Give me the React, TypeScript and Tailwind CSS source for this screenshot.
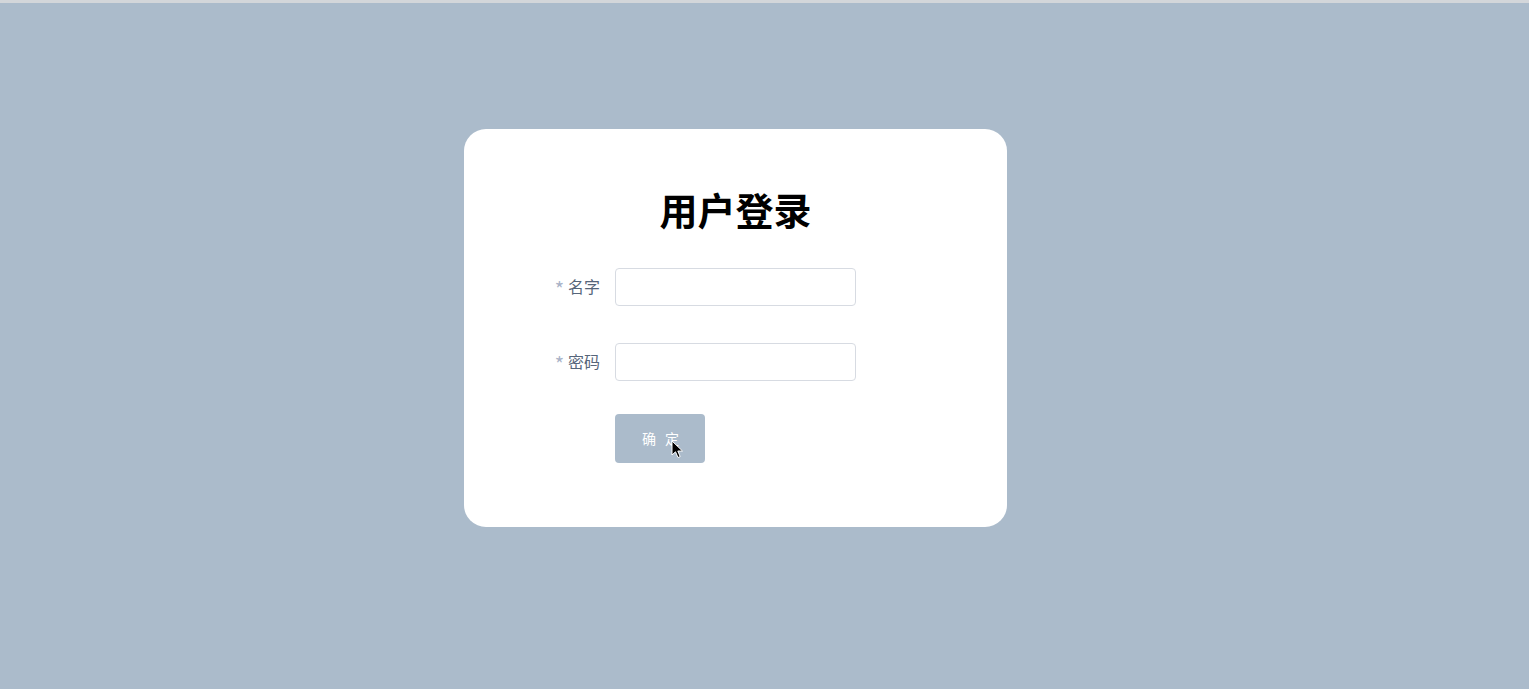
import React from 'react';

// Login card: title, two required fields and a submit button.
const FONT = { fontFamily: '"Noto Sans CJK SC", "Noto Sans", sans-serif' };

function Field({ label, type = 'text' }: { label: string; type?: string }) {
  return (
    <div className="flex items-center">
      <label className="w-[80px] pr-[15px] flex items-center justify-end text-[16px] text-[#56657a] leading-none">
        <span className="text-[#a9b3c8] text-[20px] leading-none mr-[4px] mt-[4px]">*</span>
        <span className="-mt-[2px]">{label}</span>
      </label>
      <input
        type={type}
        className="w-[241px] h-[38px] rounded-[4px] border border-[#d7dbe2] bg-white px-3 text-sm outline-none"
      />
    </div>
  );
}

function Cursor() {
  return (
    <svg
      width="13"
      height="20"
      viewBox="0 0 13 20"
      className="absolute left-[56px] top-[26px]"
      aria-hidden="true"
    >
      <path
        d="M1 1 L1 15 L4.5 11.8 L7 17.5 L9.2 16.6 L6.8 11 L11.5 11 Z"
        fill="#000"
        stroke="#fff"
        strokeWidth="1"
        strokeLinejoin="round"
      />
    </svg>
  );
}

export default function App() {
  return (
    <div className="min-h-[689px] w-full bg-[#abbbcb]" style={FONT}>
      <div className="h-[3px] bg-[#d3d6da]" />
      <div className="pl-[464px] pt-[126px]">
        <div className="w-[543px] h-[398px] rounded-[22px] bg-white pt-[61px]">
          <h1 className="text-center text-[38px] font-bold leading-none text-black">用户登录</h1>
          <div className="mt-[40px] pl-[71px] flex flex-col">
            <Field label="名字" />
            <div className="h-[37px]" />
            <Field label="密码" type="password" />
            <div className="pl-[80px] mt-[33px]">
              <div className="relative w-[90px]">
                <button
                  type="button"
                  className="w-[90px] h-[49px] rounded-[4px] bg-[#abbbcb] pl-[4px] text-white text-[14px] tracking-[3px]"
                >
                  确 定
                </button>
                <Cursor />
              </div>
            </div>
          </div>
        </div>
      </div>
    </div>
  );
}
